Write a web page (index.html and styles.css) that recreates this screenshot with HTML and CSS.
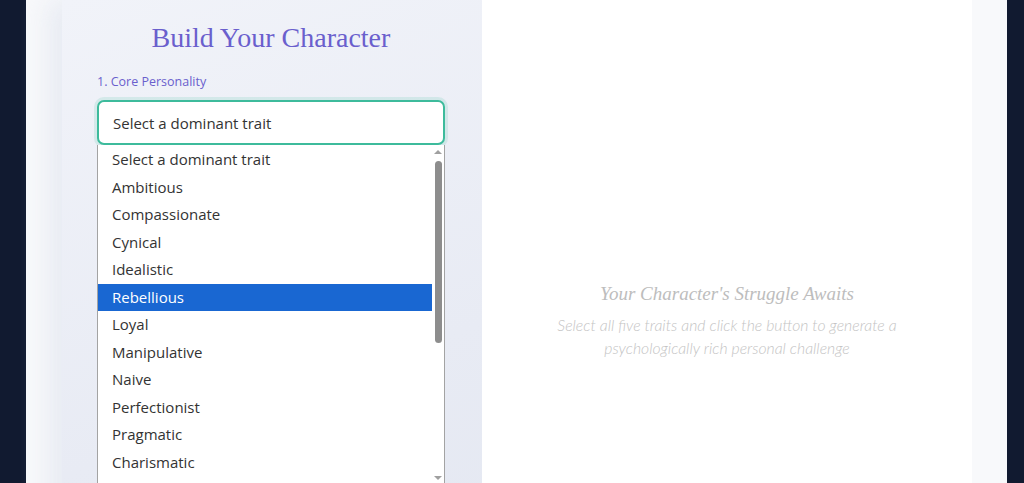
FILE: index.html
```html
<!DOCTYPE html>
<html lang="en">
<head>
  <meta charset="UTF-8" />
  <meta name="viewport" content="width=device-width, initial-scale=1.0"/>
  <title>Character Struggle Generator</title>
  <link rel="stylesheet" href="styles.css">
</head>
<body>
  <div class="page">
    <div class="builder">
      <h2>Build Your Character</h2>

      <label for="coreTrait">1. Core Personality</label>
      <div class="picker" id="coreTrait">Select a dominant trait</div>

      <!-- open dropdown of the trait picker -->
      <div class="dropdown">
        <ul class="options">
          <li>Select a dominant trait</li>
          <li>Ambitious</li>
          <li>Compassionate</li>
          <li>Cynical</li>
          <li>Idealistic</li>
          <li class="active">Rebellious</li>
          <li>Loyal</li>
          <li>Manipulative</li>
          <li>Naive</li>
          <li>Perfectionist</li>
          <li>Pragmatic</li>
          <li>Charismatic</li>
        </ul>
        <div class="scrollbar">
          <span class="arrow up"></span>
          <span class="thumb"></span>
          <span class="arrow down"></span>
        </div>
      </div>
    </div>

    <div class="result">
      <div class="placeholder">
        <h3>Your Character's Struggle Awaits</h3>
        <p>Select all five traits and click the button to generate a<br>psychologically rich personal challenge</p>
      </div>
    </div>
  </div>
</body>
</html>
```

FILE: styles.css
```css
body {
  margin: 0;
  background-color: #111a30;
  font-family: "Open Sans", Arial, sans-serif;
  overflow: hidden;
}

.page {
  width: 946px;
  margin-left: 26px;
  padding-right: 35px;
  background: #f8f9fb;
  display: flex;
  height: 640px;
}

.builder {
  width: 420px;
  margin-left: 36px;
  padding: 21px 37px 0 35px;
  box-sizing: border-box;
  background: linear-gradient(160deg, #f1f3f9 0%, #e8ebf4 60%, #e3e7f1 100%);
  box-shadow: -14px 0 24px rgba(225, 229, 240, 0.7);
}

h2 {
  margin: 0;
  text-align: center;
  font-family: "Liberation Serif", "Times New Roman", serif;
  font-weight: normal;
  font-size: 28px;
  line-height: 34px;
  color: #6a5fcd;
}

label {
  display: block;
  margin-top: 18px;
  font-size: 12.5px;
  line-height: 18px;
  color: #6a5fcd;
}

.picker {
  margin-top: 9px;
  height: 45px;
  box-sizing: border-box;
  border: 2px solid #3dbb9c;
  border-radius: 7px;
  background: white;
  box-shadow: 0 0 0 3px rgba(61, 187, 156, 0.15);
  padding-left: 14px;
  display: flex;
  align-items: center;
  font-size: 15px;
  color: #333;
}

.dropdown {
  display: flex;
  height: 338px;
  background: white;
  border: 1px solid #a3a3a3;
  border-top: none;
  border-bottom: none;
}

.options {
  flex: 1;
  margin: 0;
  padding: 1px 0 0;
  list-style: none;
}

.options li {
  height: 27.5px;
  line-height: 27.5px;
  padding-left: 14px;
  font-size: 15px;
  color: #333;
}

.options li.active {
  background: #1967d2;
  color: white;
}

.scrollbar {
  width: 12px;
  display: flex;
  flex-direction: column;
  align-items: center;
}

.thumb {
  width: 7px;
  height: 182px;
  margin-top: 7px;
  border-radius: 4px;
  background: #8d8d8d;
}

.arrow {
  width: 0;
  height: 0;
  border-left: 4px solid transparent;
  border-right: 4px solid transparent;
}

.arrow.up {
  margin-top: 5px;
  border-bottom: 4px solid #a0a0a0;
}

.arrow.down {
  margin-top: 133px;
  border-top: 4px solid #a0a0a0;
}

.result {
  flex: 1;
  background: white;
  display: flex;
  align-items: center;
  justify-content: center;
  text-align: center;
}

.placeholder h3 {
  margin: 0 0 7px;
  font-family: "Liberation Serif", "Times New Roman", serif;
  font-style: italic;
  font-weight: normal;
  font-size: 19px;
  line-height: 24px;
  color: #bdbdbd;
}

.placeholder p {
  margin: 0;
  font-family: Lato, sans-serif;
  font-style: italic;
  font-weight: 300;
  font-size: 15.8px;
  line-height: 23px;
  color: #c4c4c4;
}
```
